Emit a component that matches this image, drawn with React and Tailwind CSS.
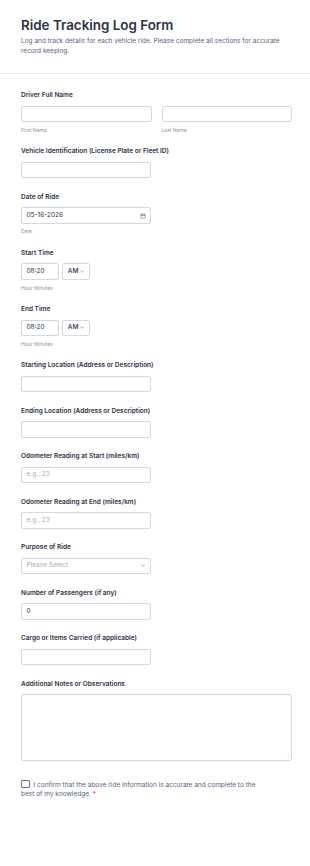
import { useState } from 'react';

const Chevron = () => (
  <svg viewBox="0 0 10 6" className="w-[4.5px] h-[3px]" fill="none" stroke="#6f7689" strokeWidth="1.4">
    <path d="M1 1l4 4 4-4" />
  </svg>
);

const CalendarIcon = () => (
  <svg viewBox="0 0 12 12" className="w-[6px] h-[6px]" fill="none" stroke="#6f7689" strokeWidth="1.2">
    <rect x="1.5" y="2.5" width="9" height="8" rx="1" />
    <path d="M1.5 5h9M4 1v3M8 1v3" />
  </svg>
);

const inputBase =
  'h-[16.5px] border border-[#d3d8e2] rounded-[2px] bg-white px-[4.5px] text-[6.5px] text-[#2c3345] flex items-center';

const Label = ({ children }) => (
  <label className="block text-[6.5px] leading-[9px] font-semibold text-[#2c3345] mb-[0.5px]">{children}</label>
);

const SubLabel = ({ children }) => (
  <span className="block mt-[4.6px] text-[5px] leading-[6px] text-[#8c93a7]">{children}</span>
);

const Field = ({ label, children, sub }) => (
  <div className="flex flex-col">
    <Label>{label}</Label>
    <div className="mt-[5px]">{children}</div>
    {sub}
  </div>
);

const TextInput = ({ value, placeholder }) => (
  <div className={`${inputBase} w-[130px]`}>
    {value ? <span>{value}</span> : <span className="text-[#a6adbd]">{placeholder}</span>}
  </div>
);

const TimeRow = () => (
  <div className="flex items-center gap-[3.6px]">
    <div className={`${inputBase} w-[37.7px]`}>08:20</div>
    <div className={`${inputBase} w-[28px] pr-[5px] justify-between font-medium`}>
      <span>AM</span>
      <Chevron />
    </div>
  </div>
);

export default function App() {
  const [checked, setChecked] = useState(false);

  return (
    <div className="min-h-[866px] bg-white font-['Inter',sans-serif]">
      <header className="px-[21px] pt-[16px] pb-[16.5px] border-b border-[#e6e8ee]">
        <h1 className="text-[13.4px] leading-[18px] font-semibold text-[#2c3345]">Ride Tracking Log Form</h1>
        <p className="mt-[1.8px] text-[6.5px] leading-[10.5px] text-[#57647e]">
          Log and track details for each vehicle ride. Please complete all sections for accurate record keeping.
        </p>
      </header>

      <main className="pl-[21px] pr-[18px] pt-[17px] flex flex-col gap-[14.5px]">
        <Field label="Driver Full Name">
          <div className="flex gap-[10px]">
            <div className="flex flex-col flex-1">
              <div className={`${inputBase} w-full`} />
              <SubLabel>First Name</SubLabel>
            </div>
            <div className="flex flex-col flex-1">
              <div className={`${inputBase} w-full`} />
              <SubLabel>Last Name</SubLabel>
            </div>
          </div>
        </Field>

        <Field label="Vehicle Identification (License Plate or Fleet ID)">
          <TextInput />
        </Field>

        <Field label="Date of Ride" sub={<SubLabel>Date</SubLabel>}>
          <div className={`${inputBase} w-[130px] justify-between`}>
            <span>05-16-2026</span>
            <CalendarIcon />
          </div>
        </Field>

        <Field label="Start Time" sub={<SubLabel>Hour Minutes</SubLabel>}>
          <TimeRow />
        </Field>

        <Field label="End Time" sub={<SubLabel>Hour Minutes</SubLabel>}>
          <TimeRow />
        </Field>

        <Field label="Starting Location (Address or Description)">
          <TextInput />
        </Field>

        <Field label="Ending Location (Address or Description)">
          <TextInput />
        </Field>

        <Field label="Odometer Reading at Start (miles/km)">
          <TextInput placeholder="e.g., 23" />
        </Field>

        <Field label="Odometer Reading at End (miles/km)">
          <TextInput placeholder="e.g., 23" />
        </Field>

        <Field label="Purpose of Ride">
          <div className={`${inputBase} w-[130px] pr-[5px] justify-between`}>
            <span className="text-[#a6adbd]">Please Select</span>
            <Chevron />
          </div>
        </Field>

        <Field label="Number of Passengers (if any)">
          <TextInput value="0" />
        </Field>

        <Field label="Cargo or Items Carried (if applicable)">
          <TextInput />
        </Field>

        <Field label="Additional Notes or Observations">
          <div className="relative -mt-[0.5px] h-[67px] w-full border border-[#d3d8e2] rounded-[2px]">
            <svg viewBox="0 0 6 6" className="absolute right-[1.5px] bottom-[1.5px] w-[3px] h-[3px]" stroke="#b5bbc8" strokeWidth="0.8">
              <path d="M1 5.5L5.5 1M3.5 5.5L5.5 3.5" />
            </svg>
          </div>
        </Field>

        <p className="mt-[5px] w-[245px] text-[6.5px] leading-[9px] text-[#57647e]">
          <span
            onClick={() => setChecked(!checked)}
            className="inline-block align-[-1.5px] mr-[4px] w-[8.5px] h-[8px] border border-[#6f7689] rounded-[1px] bg-white"
          />
          I confirm that the above ride information is accurate and complete to the best of my knowledge.{' '}
          <span className="text-[#f23a3c]">*</span>
        </p>
      </main>
    </div>
  );
}
